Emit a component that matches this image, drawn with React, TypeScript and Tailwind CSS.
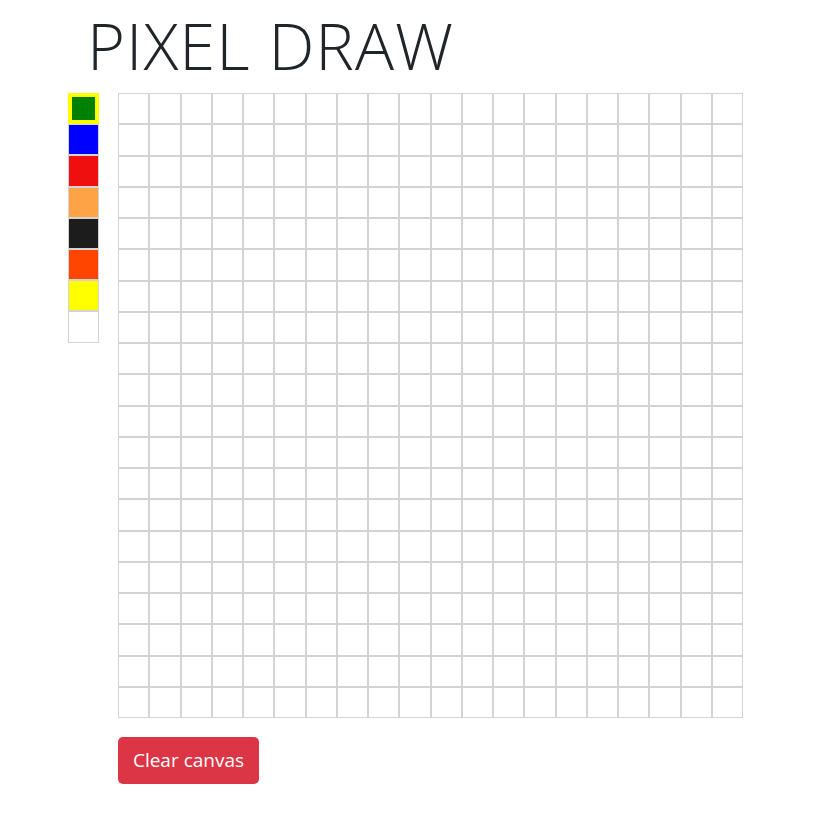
import React, { useState } from 'react';

const COLORS = ['#008000', '#0000ff', '#f00f0f', '#ffa347', '#1c1c1c', '#ff4500', '#ffff00', '#ffffff'];
const SIZE = 20;

export default function App() {
  const [current, setCurrent] = useState(0);
  const [cells, setCells] = useState<(string | null)[]>(() => Array(SIZE * SIZE).fill(null));

  const paint = (i: number) => {
    const next = [...cells];
    next[i] = COLORS[current];
    setCells(next);
  };

  return (
    <div className="min-h-screen bg-white text-[#212529] font-['Segoe_UI','Open_Sans',sans-serif]">
      <div className="pl-[68px] pt-[6px]">
        {/* Title */}
        <h1 className="pl-[19px] text-[65px] font-light leading-[1.2] tracking-[1px] h-[87px]">PIXEL DRAW</h1>

        <div className="flex gap-[19px]">
          {/* Palette */}
          <div className="flex flex-col w-[31px]">
            {COLORS.map((c, i) => (
              <button
                key={c}
                onClick={() => setCurrent(i)}
                className={`w-[31px] h-[31.2px] border ${i === current ? 'border-4 border-[#ffff00]' : 'border-[#d3d3d3]'}`}
                style={{ backgroundColor: c }}
              />
            ))}
          </div>

          <div className="flex flex-col">
            {/* Canvas */}
            <div className="grid grid-cols-[repeat(20,31.25px)] w-[625px]">
              {cells.map((c, i) => (
                <div
                  key={i}
                  onClick={() => paint(i)}
                  className="h-[31.25px] border border-[#d3d3d3]"
                  style={{ backgroundColor: c ?? '#ffffff' }}
                />
              ))}
            </div>

            <div className="mt-[19px]">
              <button
                onClick={() => setCells(Array(SIZE * SIZE).fill(null))}
                className="h-[47px] w-[141px] rounded-[5px] bg-[#dc3545] text-white text-[19px] leading-[1.5]"
              >
                Clear canvas
              </button>
            </div>
          </div>
        </div>
      </div>
    </div>
  );
}
